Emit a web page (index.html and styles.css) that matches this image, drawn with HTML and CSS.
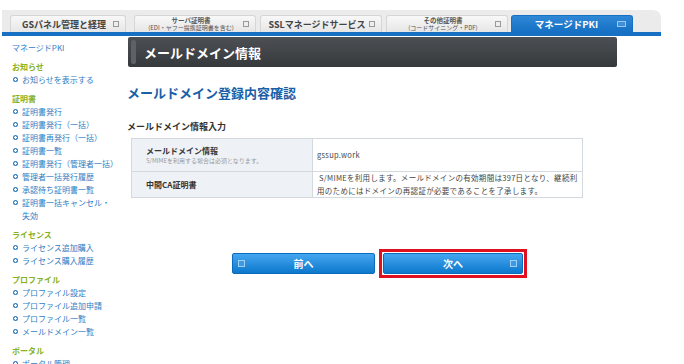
FILE: index.html
```html
<!DOCTYPE html>
<html lang="ja">
<head>
    <meta charset="UTF-8">
    <title>メールドメイン情報</title>
    <link rel="stylesheet" href="styles.css">
</head>
<body>
    <div class="tabbar">
        <div class="tab tab-first"><span class="tab-label big">GSパネル管理と経理</span><i class="tab-ico"></i></div>
        <div class="tab"><span class="tab-label small"><b>サーバ証明書</b><span>(EDI・ヤフー提携証明書を含む)</span></span><i class="tab-ico"></i></div>
        <div class="tab"><span class="tab-label big">SSLマネージドサービス</span><i class="tab-ico"></i></div>
        <div class="tab"><span class="tab-label small"><b>その他証明書</b><span>(コードサイニング・PDF)</span></span><i class="tab-ico"></i></div>
        <div class="tab active"><span class="tab-label big">マネージドPKI</span><i class="tab-ico"></i></div>
    </div>

    <div class="page">
        <div class="side">
            <div class="side-top">マネージドPKI</div>

            <div class="side-head">お知らせ</div>
            <ul>
                <li>お知らせを表示する</li>
            </ul>

            <div class="side-head">証明書</div>
            <ul>
                <li>証明書発行</li>
                <li>証明書発行（一括）</li>
                <li>証明書再発行（一括）</li>
                <li>証明書一覧</li>
                <li>証明書発行（管理者一括）</li>
                <li>管理者一括発行履歴</li>
                <li>承認待ち証明書一覧</li>
                <li>証明書一括キャンセル・<br>失効</li>
            </ul>

            <div class="side-head">ライセンス</div>
            <ul>
                <li>ライセンス追加購入</li>
                <li>ライセンス購入履歴</li>
            </ul>

            <div class="side-head">プロファイル</div>
            <ul>
                <li>プロファイル設定</li>
                <li>プロファイル追加申請</li>
                <li>プロファイル一覧</li>
                <li>メールドメイン一覧</li>
            </ul>

            <div class="side-head">ポータル</div>
            <ul>
                <li>ポータル管理</li>
            </ul>
        </div>

        <div class="main">
            <div class="page-head"><span>メールドメイン情報</span></div>
            <h1>メールドメイン登録内容確認</h1>
            <h2>メールドメイン情報入力</h2>

            <table>
                <tr class="row1">
                    <th>メールドメイン情報<small>S/MIMEを利用する場合は必須となります。</small></th>
                    <td>gssup.work</td>
                </tr>
                <tr class="row2">
                    <th>中間CA証明書</th>
                    <td>&nbsp;S/MIMEを利用します。メールドメインの有効期間は397日となり、継続利用のためにはドメインの再認証が必要であることを了承します。</td>
                </tr>
            </table>

            <div class="buttons">
                <button class="btn btn-back"><i class="btn-ico left"></i>前へ</button>
                <div class="focus">
                    <button class="btn btn-next">次へ<i class="btn-ico right"></i></button>
                </div>
            </div>
        </div>
    </div>
</body>
</html>
```

FILE: styles.css
```css
body {
    margin: 0;
    font-family: "Noto Sans CJK JP", "Liberation Sans", sans-serif;
    background: #fff;
    color: #333;
    width: 684px;
    height: 364px;
    overflow: hidden;
}

/* タブ */
.tabbar {
    margin: 10px 0 0 2px;
    width: 651px;
    height: 17px;
    padding: 5px 0 0 8px;
    box-sizing: content-box;
    background: #ebebeb;
    border-radius: 0 8px 0 0;
    border-bottom: 4px solid #1670c4;
    display: flex;
    align-items: flex-end;
    gap: 4px;
}
.tab {
    width: 122px;
    height: 17px;
    background: linear-gradient(#f8f8f8, #e6e6e6);
    border: 1px solid #d6d6d6;
    border-bottom: none;
    border-radius: 3px 3px 0 0;
    display: flex;
    align-items: center;
    box-sizing: border-box;
    padding: 0 6px 0 4px;
}
.tab-first { width: 116px; margin-right: 4px; }
.tab-label {
    flex: 1;
    text-align: center;
    color: #444;
    font-weight: bold;
}
.tab-label.big { font-size: 9px; }
.tab-label.small {
    display: flex;
    flex-direction: column;
    align-items: center;
    font-weight: normal;
    color: #555;
}
.tab-label.small b {
    font-size: 6.5px;
    line-height: 7.5px;
}
.tab-label.small span {
    font-size: 6px;
    line-height: 7px;
}
.tab-ico {
    width: 4px;
    height: 4px;
    border: 1px solid #999;
    background: #eee;
}
.tab.active {
    background: linear-gradient(#2f87d6, #1670c4);
    border-color: #1670c4;
    margin-left: -1px;
}
.tab.active .tab-label { color: #fff; font-size: 9.5px; }
.tab.active .tab-ico {
    width: 7px;
    height: 4px;
    border-color: #9cc6ee;
    background: #3d8fd8;
}

.page {
    display: flex;
}

/* サイドメニュー */
.side {
    width: 115px;
    padding: 5px 0 0 12px;
    font-size: 8px;
    line-height: 13px;
    color: #2f7dc4;
}
.side-top {
    margin-bottom: 6px;
}
.side-head {
    color: #8ab21c;
    font-weight: bold;
}
.side ul {
    list-style: none;
    margin: 0 0 6px;
    padding: 0;
}
.side li {
    position: relative;
    padding-left: 10px;
}
.side li::before {
    content: "";
    position: absolute;
    left: 1px;
    top: 4px;
    width: 5px;
    height: 5px;
    border-radius: 50%;
    background: radial-gradient(circle, #fff 0 1px, #2f7dc4 1.5px);
}

/* メイン */
.main {
    width: 490px;
}
.page-head {
    margin: 1px 0 0 1px;
    height: 30px;
    background: linear-gradient(#4c5054, #36393c);
    border-radius: 2px;
    display: flex;
    align-items: center;
    position: relative;
    padding-left: 16px;
    box-sizing: border-box;
}
.page-head::before {
    content: "";
    position: absolute;
    left: 3px;
    top: 3px;
    bottom: 3px;
    width: 5px;
    background: #5c6268;
    border-radius: 2px;
}
.page-head span {
    color: #fff;
    font-size: 13px;
    font-weight: bold;
}
h1 {
    margin: 16px 0 0;
    font-size: 13px;
    color: #1a5fa8;
    font-weight: bold;
    line-height: 20px;
}
h2 {
    margin: 17px 0 0;
    font-size: 9px;
    font-weight: bold;
    color: #333;
    line-height: 14px;
}
table {
    margin: 4px 0 0 4px;
    width: 452px;
    border-collapse: collapse;
    border: 1px solid #d4d9de;
}
th, td {
    border: 1px solid #d4d9de;
    vertical-align: middle;
}
th {
    width: 181px;
    background: #eef2f6;
    text-align: left;
    padding: 0 0 0 14px;
    box-sizing: border-box;
    font-size: 8px;
    font-weight: bold;
    color: #333;
    line-height: 11px;
}
th small {
    display: block;
    font-size: 6px;
    font-weight: normal;
    color: #999;
    line-height: 9px;
}
td {
    padding: 0 3px 0 4px;
    font-size: 7.5px;
    color: #444;
    line-height: 12.5px;
    letter-spacing: 0.3px;
}
.row1 { height: 33px; }
.row2 { height: 26px; }

/* ボタン */
.buttons {
    display: flex;
    align-items: center;
    margin: 51px 0 0 105px;
    gap: 4px;
}
.btn {
    position: relative;
    height: 21px;
    border: 1px solid #0b6bbd;
    border-radius: 2px;
    background: linear-gradient(#45a6f0, #0c78cc);
    color: #fff;
    font-family: inherit;
    font-size: 10px;
    font-weight: bold;
    padding: 0;
}
.btn-back { width: 143px; }
.btn-next { width: 140px; }
.focus {
    border: 3px solid #e01020;
    padding: 1px;
    display: flex;
}
.btn-ico {
    position: absolute;
    top: 6px;
    width: 5px;
    height: 5px;
    border: 1px solid #9fd0f6;
    background: #3e9ae2;
}
.btn-ico.left { left: 5px; }
.btn-ico.right { right: 5px; }
```
